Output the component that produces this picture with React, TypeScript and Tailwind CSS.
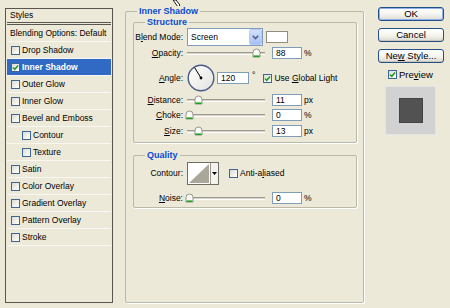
import React from "react";

const FONT = "font-['Liberation_Sans',Arial,sans-serif]";

// XP style little checkbox
function Check({ checked = false }: { checked?: boolean }) {
  return (
    <div className="w-[9px] h-[9px] shrink-0 border border-[#3f6592] bg-linear-to-br from-[#dcdcd5] to-white flex items-center justify-center">
      {checked && (
        <svg width="7" height="7" viewBox="0 0 7 7">
          <path d="M1 3.5 L2.8 5.3 L6 1.5" fill="none" stroke="#21a121" strokeWidth="1.6" />
        </svg>
      )}
    </div>
  );
}

const styleItems = [
  { label: "Drop Shadow", indent: false },
  { label: "Inner Shadow", indent: false, selected: true },
  { label: "Outer Glow", indent: false },
  { label: "Inner Glow", indent: false },
  { label: "Bevel and Emboss", indent: false },
  { label: "Contour", indent: true },
  { label: "Texture", indent: true },
  { label: "Satin", indent: false },
  { label: "Color Overlay", indent: false },
  { label: "Gradient Overlay", indent: false },
  { label: "Pattern Overlay", indent: false },
  { label: "Stroke", indent: false },
];

function Thumb() {
  return (
    <svg width="9" height="10" viewBox="0 0 9 10">
      <path d="M1 4.5 Q1 1 4.5 1 Q8 1 8 4.5 L8 9 L1 9 Z" fill="#fbfbf8" stroke="#8a8a84" strokeWidth="0.9" />
      <rect x="1.5" y="7.4" width="6" height="1.6" fill="#21a121" />
    </svg>
  );
}

function Slider({ pos }: { pos: number }) {
  return (
    <div className="relative w-[78px] h-full shrink-0 flex items-center">
      <div className="w-full h-[3px] border-t border-[#9d9b90] border-b border-b-white bg-[#d6d3c6]" />
      <div className="absolute top-[1px]" style={{ left: pos - 4 }}>
        <Thumb />
      </div>
    </div>
  );
}

function NumBox({ value, w = "w-[30px]" }: { value: string; w?: string }) {
  return (
    <div className={`${w} h-[12px] shrink-0 bg-white border border-[#7f9db9] flex items-center pl-[3px] leading-none`}>
      {value}
    </div>
  );
}

function Label({ children }: { children: React.ReactNode }) {
  return <div className="w-[50px] shrink-0 text-right pr-[1px] whitespace-nowrap">{children}</div>;
}

function SliderRow({
  label,
  pos,
  value,
  unit,
  className = "",
}: {
  label: React.ReactNode;
  pos: number;
  value: string;
  unit: string;
  className?: string;
}) {
  return (
    <div className={`flex items-center h-[12px] ${className}`}>
      <Label>{label}</Label>
      <div className="ml-[3px] h-full flex items-center">
        <Slider pos={pos} />
      </div>
      <div className="ml-[7px]">
        <NumBox value={value} />
      </div>
      <div className="ml-[2px]">{unit}</div>
    </div>
  );
}

function Button({ children, isDefault = false, className = "" }: { children: React.ReactNode; isDefault?: boolean; className?: string }) {
  return (
    <div
      className={`h-[14px] w-full rounded-[3px] border border-[#24508a] bg-linear-to-b from-white via-[#f6f5f0] to-[#dcdad0] flex items-center justify-center text-[9.5px] leading-none ${
        isDefault ? "shadow-[inset_0_0_0_1px_#8fb0ea]" : "shadow-[inset_0_-1px_0_#c9c6b8]"
      } ${className}`}
    >
      <span className="whitespace-nowrap">{children}</span>
    </div>
  );
}

function GroupTitle({ children, left }: { children: React.ReactNode; left: string }) {
  return (
    <div className={`absolute -top-[6px] ${left} px-[2px] bg-[#ece9d8] text-[#0b49d6] font-bold text-[9px] leading-[11px] whitespace-nowrap`}>
      {children}
    </div>
  );
}

export default function App() {
  return (
    <div className={`relative w-[450px] h-[308px] overflow-hidden bg-[#ece9d8] flex items-start text-[8.5px] leading-none text-black ${FONT}`}>
      {/* mouse cursor tail */}
      <svg className="absolute left-[173px] top-0" width="9" height="8" viewBox="0 0 9 8">
        <path d="M0 0 L3 0 L7 5 L5 7 Z" fill="#fff" stroke="#000" strokeWidth="0.9" />
      </svg>

      {/* Styles list */}
      <div className="ml-[5px] mt-[8px] w-[108px] h-[295px] border border-[#58564e] flex flex-col px-[1px] whitespace-nowrap">
        <div className="h-[16px] flex items-center pl-[3px] border-b-[3px] border-double border-[#58564e]">Styles</div>
        <div className="h-[17px] flex items-center pl-[3px] border-b border-[#f8f7f1]">Blending Options: Default</div>
        {styleItems.map((it) => (
          <div
            key={it.label}
            className={`h-[17px] flex items-center gap-[2px] border-b border-[#f8f7f1] ${it.indent ? "pl-[15px]" : "pl-[4px]"} ${
              it.selected ? "bg-[#316ac5] text-white font-bold" : ""
            }`}
          >
            <Check checked={!!it.selected} />
            <span>{it.label}</span>
          </div>
        ))}
      </div>

      {/* Inner Shadow group */}
      <div className="relative ml-[12px] mt-[11px] w-[239px] h-[292px] border border-[#bab8a7] rounded-[2px] shadow-[1px_1px_0_#fff]">
        <GroupTitle left="left-[11px]">Inner Shadow</GroupTitle>

        {/* Structure */}
        <div className="relative ml-[7px] mt-[10px] w-[224px] h-[121px] border border-[#bab8a7] rounded-[2px] shadow-[1px_1px_0_#fff] flex flex-col pt-[5px]">
          <GroupTitle left="left-[11px]">Structure</GroupTitle>

          <div className="flex items-center h-[18px]">
            <Label>
              B<u>l</u>end Mode:
            </Label>
            <div className="ml-[3px] w-[76px] h-[18px] bg-white border border-[#7f9db9] flex items-center">
              <span className="flex-1 pl-[3px]">Screen</span>
              <div className="w-[13px] h-[16px] rounded-[2px] bg-linear-to-b from-[#d4e1fd] to-[#a9c0f3] border border-[#b8cbf5] flex items-center justify-center">
                <svg width="7" height="5" viewBox="0 0 7 5">
                  <path d="M0.8 0.8 L3.5 3.6 L6.2 0.8" fill="none" stroke="#4d6185" strokeWidth="1.5" />
                </svg>
              </div>
            </div>
            <div className="ml-[3px] w-[22px] h-[12px] bg-white border border-[#8f8d82]" />
          </div>

          <SliderRow className="mt-[1px]" label={<><u>O</u>pacity:</>} pos={69} value="88" unit="%" />

          <div className="flex items-center h-[28px] mt-[5px]">
            <Label>
              <u>A</u>ngle:
            </Label>
            <svg className="ml-[3px] shrink-0" width="28" height="28" viewBox="0 0 28 28">
              <defs>
                <linearGradient id="dialg" x1="0" y1="0" x2="1" y2="1">
                  <stop offset="0" stopColor="#ffffff" />
                  <stop offset="1" stopColor="#e2e2dc" />
                </linearGradient>
              </defs>
              <circle cx="14" cy="14" r="12.8" fill="url(#dialg)" stroke="#4a5b85" strokeWidth="1.4" />
              <line x1="14" y1="14" x2="7.6" y2="3.6" stroke="#000" strokeWidth="1" />
              <circle cx="14" cy="14" r="1.4" fill="#000" />
            </svg>
            <div className="ml-[2px]">
              <NumBox value="120" w="w-[32px]" />
            </div>
            <div className="ml-[3px] self-start mt-[7px]">°</div>
            <div className="ml-[8px] flex items-center gap-[2px] whitespace-nowrap">
              <Check checked />
              <span>
                Use <u>G</u>lobal Light
              </span>
            </div>
          </div>

          <SliderRow className="mt-[2px]" label={<><u>D</u>istance:</>} pos={11} value="11" unit="px" />
          <SliderRow className="mt-[3px]" label={<><u>C</u>hoke:</>} pos={2} value="0" unit="%" />
          <SliderRow className="mt-[4px]" label={<><u>S</u>ize:</>} pos={11} value="13" unit="px" />
        </div>

        {/* Quality */}
        <div className="relative ml-[7px] mt-[12px] w-[224px] h-[53px] border border-[#bab8a7] rounded-[2px] shadow-[1px_1px_0_#fff] flex flex-col pt-[6px]">
          <GroupTitle left="left-[11px]">Quality</GroupTitle>

          <div className="flex items-center h-[23px]">
            <Label>Contour:</Label>
            <div className="ml-[3px] w-[32px] h-[23px] border border-[#6f6d64] bg-white flex">
              <svg width="22" height="21" viewBox="0 0 22 21">
                <rect x="0" y="0" width="22" height="21" fill="#fff" />
                <path d="M1 20 L21 1 L21 20 Z" fill="#aaa699" />
              </svg>
              <div className="flex-1 border-l border-[#9a988c] bg-[#f4f3ee] flex items-center justify-center">
                <svg width="5" height="3" viewBox="0 0 5 3">
                  <path d="M0 0 L5 0 L2.5 3 Z" fill="#000" />
                </svg>
              </div>
            </div>
            <div className="ml-[10px] flex items-center gap-[2px] whitespace-nowrap">
              <Check />
              <span>
                Anti-a<u>l</u>iased
              </span>
            </div>
          </div>

          <SliderRow className="mt-[7px]" label={<><u>N</u>oise:</>} pos={2} value="0" unit="%" />
        </div>
      </div>

      {/* Buttons */}
      <div className="ml-[14px] mt-[7px] w-[66px] flex flex-col">
        <Button isDefault>OK</Button>
        <Button className="mt-[7px]">Cancel</Button>
        <Button className="mt-[7px]">
          Ne<u>w</u> Style...
        </Button>
        <div className="mt-[7px] ml-[10px] flex items-center gap-[2px] h-[9px]">
          <Check checked />
          <span className="text-[9.5px]">
            Pre<u>v</u>iew
          </span>
        </div>
        <div className="mt-[7px] ml-[7px] w-[51px] h-[49px] bg-[#d2d2d2] border border-[#e4e4e4] flex items-center justify-center">
          <div className="w-[24px] h-[25px] bg-[#525252] border border-[#444]" />
        </div>
      </div>
    </div>
  );
}
